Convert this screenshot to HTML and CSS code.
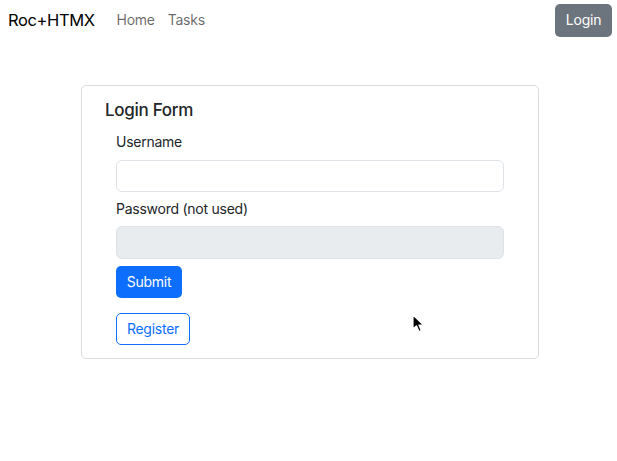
FILE: index.html
```html
<!DOCTYPE html>
<html>
<head>
<meta charset="utf-8">
<link rel="stylesheet" href="styles.css">
</head>
<body>
<nav class="navbar">
  <a class="brand">Roc+HTMX</a>
  <a class="nav-link">Home</a>
  <a class="nav-link">Tasks</a>
  <span class="spacer"></span>
  <button class="btn btn-secondary">Login</button>
</nav>
<main class="main">
  <div class="card">
    <h5 class="card-title">Login Form</h5>
    <form class="form">
      <label class="label">Username</label>
      <input class="input" type="text">
      <label class="label label-pw">Password (not used)</label>
      <input class="input input-disabled" type="password" disabled>
      <button type="button" class="btn btn-primary">Submit</button>
      <button type="button" class="btn btn-outline">Register</button>
    </form>
  </div>
</main>
<svg class="cursor" width="14" height="20" viewBox="0 0 14 20">
  <path d="M1 1 L1 15 L4.5 11.8 L7 17.5 L9.3 16.5 L6.9 11 L11.5 11 Z" fill="#000" stroke="#fff" stroke-width="1.2" stroke-linejoin="round"/>
</svg>
</body>
</html>
```
FILE: styles.css
```css
* { box-sizing: border-box; }
html, body { margin: 0; padding: 0; background: #fff; }
body {
  font-family: Inter, "Noto Sans", "Liberation Sans", sans-serif;
  color: #212529;
  font-size: 14px;
  letter-spacing: -0.25px;
  position: relative;
  height: 461px;
  overflow: hidden;
}
.navbar {
  display: flex;
  align-items: center;
  height: 39px;
  padding: 0 5px 0 8px;
}
.brand { font-size: 16.5px; color: #000; margin-right: 22px; letter-spacing: -0.4px; }
.nav-link { font-size: 14px; color: rgba(0,0,0,0.6); margin-right: 13px; }
.spacer { flex: 1; }
.btn {
  font-family: inherit;
  font-size: 14px;
  letter-spacing: -0.25px;
  border-radius: 5px;
  border: 1px solid transparent;
  padding: 0;
  height: 32px;
  line-height: 30px;
  cursor: pointer;
}
.btn-secondary { background: #6c757d; color: #fff; height: 33px; width: 57px; margin-top: 1px; }
.main { padding: 46px 0 0 81px; }
.card {
  width: 458px;
  height: 274px;
  border: 1px solid #dcdcdc;
  border-radius: 5px;
  padding: 14px 34px 0 23px;
}
.card-title {
  margin: 0;
  font-size: 17px;
  font-weight: 500;
  line-height: 20px;
  letter-spacing: -0.3px;
}
.form {
  display: flex;
  flex-direction: column;
  align-items: flex-start;
  padding-left: 11px;
  margin-top: 12px;
}
.label { line-height: 20px; font-size: 14px; }
.input {
  width: 388px;
  height: 32px;
  border: 1px solid #dee2e6;
  border-radius: 6px;
  margin-top: 8px;
  background: #fff;
}
.label-pw { margin-top: 7px; }
.input-disabled { background: #e9ecef; height: 33px; margin-top: 7px; }
.btn-primary { background: #0d6efd; color: #fff; margin-top: 7px; width: 66px; }
.btn-outline { background: #fff; color: #0d6efd; border-color: #0d6efd; margin-top: 15px; width: 74px; }
.cursor { position: absolute; left: 412px; top: 314px; }
```
